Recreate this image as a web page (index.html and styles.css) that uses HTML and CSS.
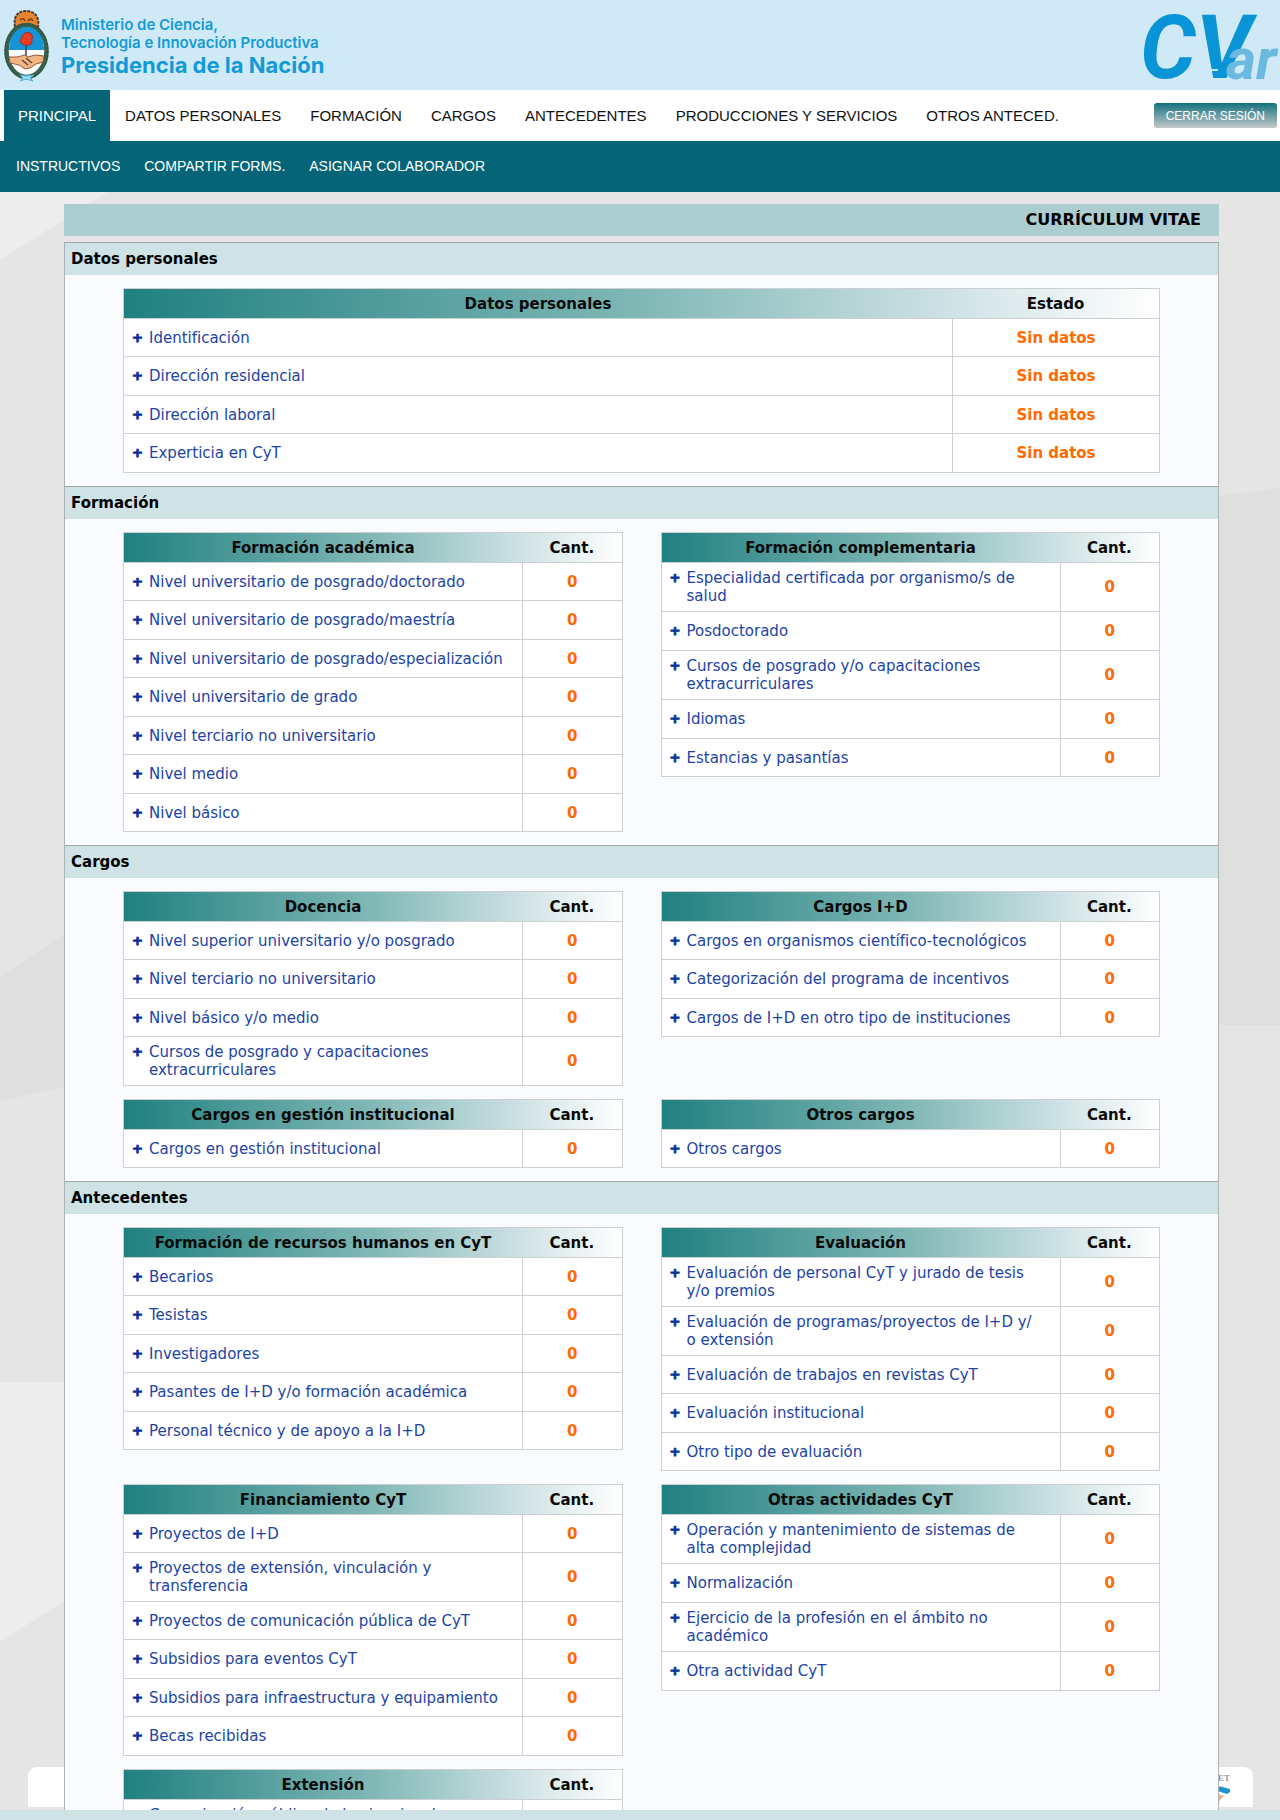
FILE: index.html
```html
<!DOCTYPE html>
<html lang="es">
<head>
<meta charset="utf-8">
<title>CVar - Currículum Vitae</title>
<link rel="stylesheet" href="styles.css">
</head>
<body>
<header class="banner">
  <a class="ministry" href="#">
    <svg class="emblem" viewBox="0 0 45 72" aria-hidden="true">
      <path d="M11 17C9 5 15 1 22 1s14 4 12 16z" fill="#e8842c" stroke="#4b3b35" stroke-width="2" stroke-dasharray="3 1"/>
      <path d="M16 10q3-3 5 1M24 11q3-4 5 0M19 15h7" fill="none" stroke="#7a3c17" stroke-width="1.5"/>
      <ellipse cx="22.500" cy="41" rx="20" ry="26" fill="#fff" stroke="#37614b" stroke-width="4.500"/>
      <ellipse cx="22.500" cy="41" rx="21.500" ry="27" fill="none" stroke="#27443a" stroke-width="1" stroke-dasharray="2 2"/>
      <path d="M5 40C5 25 13 17 22.500 17S40 25 40 40z" fill="#1595d8"/>
      <path d="M22 32v20" stroke="#3d4650" stroke-width="1.500"/>
      <path d="M17 33c-2-3 0-4 1-6 1-5 8-6 10-2 1 3-1 5 0 8-3 3-7 3-11 0z" fill="#ea3f25" stroke="#a22c20"/>
      <path d="M5 47l8 0 8-2 3 2 7-2 9 1-1 6-7 2-6 4-5 1-6-4-9-2z" fill="#f2b684" stroke="#8c5b3b"/>
      <path d="M18 50l6 5M22 48l6 5" stroke="#5c4030" stroke-width="1.500"/>
      <path d="M16 65l6 1 8-1-4 3 3 3-7-2-6 2 3-3z" fill="#a9dcf3" stroke="#4fb2df"/>
    </svg>
    <span class="ministry-name">
      <span>Ministerio de Ciencia,</span>
      <span>Tecnología e Innovación Productiva</span>
      <strong>Presidencia de la Nación</strong>
    </span>
  </a>
  <svg class="cvar" viewBox="0 0 140 90" role="img" aria-label="CVar">
    <text class="cvar-main" x="0" y="78">CV</text>
    <path d="M68 70h10" stroke="#cfeaf6" stroke-width="2"/>
    <text class="cvar-sub" x="86" y="79">ar</text>
  </svg>
</header>

<nav class="menu">
  <a class="active" href="#">PRINCIPAL</a>
  <a href="#">DATOS PERSONALES</a>
  <a href="#">FORMACIÓN</a>
  <a href="#">CARGOS</a>
  <a href="#">ANTECEDENTES</a>
  <a href="#">PRODUCCIONES Y SERVICIOS</a>
  <a href="#">OTROS ANTECED.</a>
  <button class="logout" type="button">CERRAR SESIÓN</button>
</nav>
<nav class="submenu">
  <a href="#">INSTRUCTIVOS</a>
  <a href="#">COMPARTIR FORMS.</a>
  <a href="#">ASIGNAR COLABORADOR</a>
</nav>

<main class="page">
  <svg class="backdrop" viewBox="0 0 1280 1618" preserveAspectRatio="none" aria-hidden="true">
    <path d="M0 0H108L0 68z" fill="#ededed"/>
    <path d="M0 785L64 743 1218 304 1280 296V833H1218L64 895 0 909z" fill="#dfdfdf"/>
    <path d="M0 1190H400L64 1409 0 1450z" fill="#ededed"/>
  </svg>
  <div class="sponsors">
    <svg class="sponsor" viewBox="0 0 64 40" aria-hidden="true">
      <text x="63" y="14" text-anchor="end">ET</text>
      <path d="M30 24q14-9 33-2v3l-3 2q-14-6-27 0z" fill="#1c95cc"/>
      <path d="M36 29q10-5 21 0l-5 5H40z" fill="#f2ae7c"/>
      <path d="M40 33h13l-4 3h-7z" fill="#3fa5a0"/>
    </svg>
  </div>

  <div class="content">
    <h1 class="title">CURRÍCULUM VITAE</h1>
    <div class="panel">
      <section>
        <h2>Datos personales</h2>
        <div class="tables single">
          <table>
            <thead><tr><th>Datos personales</th><th>Estado</th></tr></thead>
            <tbody>
              <tr><td><a href="#">Identificación</a></td><td>Sin datos</td></tr>
              <tr><td><a href="#">Dirección residencial</a></td><td>Sin datos</td></tr>
              <tr><td><a href="#">Dirección laboral</a></td><td>Sin datos</td></tr>
              <tr><td><a href="#">Experticia en CyT</a></td><td>Sin datos</td></tr>
            </tbody>
          </table>
        </div>
      </section>

      <section>
        <h2>Formación</h2>
        <div class="tables">
          <table>
            <thead><tr><th>Formación académica</th><th>Cant.</th></tr></thead>
            <tbody>
              <tr><td><a href="#">Nivel universitario de posgrado/doctorado</a></td><td>0</td></tr>
              <tr><td><a href="#">Nivel universitario de posgrado/maestría</a></td><td>0</td></tr>
              <tr><td><a href="#">Nivel universitario de posgrado/especialización</a></td><td>0</td></tr>
              <tr><td><a href="#">Nivel universitario de grado</a></td><td>0</td></tr>
              <tr><td><a href="#">Nivel terciario no universitario</a></td><td>0</td></tr>
              <tr><td><a href="#">Nivel medio</a></td><td>0</td></tr>
              <tr><td><a href="#">Nivel básico</a></td><td>0</td></tr>
            </tbody>
          </table>
          <table>
            <thead><tr><th>Formación complementaria</th><th>Cant.</th></tr></thead>
            <tbody>
              <tr><td><a href="#">Especialidad certificada por organismo/s de salud</a></td><td>0</td></tr>
              <tr><td><a href="#">Posdoctorado</a></td><td>0</td></tr>
              <tr><td><a href="#">Cursos de posgrado y/o capacitaciones extracurriculares</a></td><td>0</td></tr>
              <tr><td><a href="#">Idiomas</a></td><td>0</td></tr>
              <tr><td><a href="#">Estancias y pasantías</a></td><td>0</td></tr>
            </tbody>
          </table>
        </div>
      </section>

      <section>
        <h2>Cargos</h2>
        <div class="tables">
          <table>
            <thead><tr><th>Docencia</th><th>Cant.</th></tr></thead>
            <tbody>
              <tr><td><a href="#">Nivel superior universitario y/o posgrado</a></td><td>0</td></tr>
              <tr><td><a href="#">Nivel terciario no universitario</a></td><td>0</td></tr>
              <tr><td><a href="#">Nivel básico y/o medio</a></td><td>0</td></tr>
              <tr><td><a href="#">Cursos de posgrado y capacitaciones extracurriculares</a></td><td>0</td></tr>
            </tbody>
          </table>
          <table>
            <thead><tr><th>Cargos I+D</th><th>Cant.</th></tr></thead>
            <tbody>
              <tr><td><a href="#">Cargos en organismos científico-tecnológicos</a></td><td>0</td></tr>
              <tr><td><a href="#">Categorización del programa de incentivos</a></td><td>0</td></tr>
              <tr><td><a href="#">Cargos de I+D en otro tipo de instituciones</a></td><td>0</td></tr>
            </tbody>
          </table>
          <table>
            <thead><tr><th>Cargos en gestión institucional</th><th>Cant.</th></tr></thead>
            <tbody>
              <tr><td><a href="#">Cargos en gestión institucional</a></td><td>0</td></tr>
            </tbody>
          </table>
          <table>
            <thead><tr><th>Otros cargos</th><th>Cant.</th></tr></thead>
            <tbody>
              <tr><td><a href="#">Otros cargos</a></td><td>0</td></tr>
            </tbody>
          </table>
        </div>
      </section>

      <section>
        <h2>Antecedentes</h2>
        <div class="tables">
          <table>
            <thead><tr><th>Formación de recursos humanos en CyT</th><th>Cant.</th></tr></thead>
            <tbody>
              <tr><td><a href="#">Becarios</a></td><td>0</td></tr>
              <tr><td><a href="#">Tesistas</a></td><td>0</td></tr>
              <tr><td><a href="#">Investigadores</a></td><td>0</td></tr>
              <tr><td><a href="#">Pasantes de I+D y/o formación académica</a></td><td>0</td></tr>
              <tr><td><a href="#">Personal técnico y de apoyo a la I+D</a></td><td>0</td></tr>
            </tbody>
          </table>
          <table>
            <thead><tr><th>Evaluación</th><th>Cant.</th></tr></thead>
            <tbody>
              <tr><td><a href="#">Evaluación de personal CyT y jurado de tesis y/o premios</a></td><td>0</td></tr>
              <tr><td><a href="#"><span>Evaluación de programas/proyectos de I+D y/<wbr>o&nbsp;extensión</span></a></td><td>0</td></tr>
              <tr><td><a href="#">Evaluación de trabajos en revistas CyT</a></td><td>0</td></tr>
              <tr><td><a href="#">Evaluación institucional</a></td><td>0</td></tr>
              <tr><td><a href="#">Otro tipo de evaluación</a></td><td>0</td></tr>
            </tbody>
          </table>
          <table>
            <thead><tr><th>Financiamiento CyT</th><th>Cant.</th></tr></thead>
            <tbody>
              <tr><td><a href="#">Proyectos de I+D</a></td><td>0</td></tr>
              <tr><td><a href="#">Proyectos de extensión, vinculación y transferencia</a></td><td>0</td></tr>
              <tr><td><a href="#">Proyectos de comunicación pública de CyT</a></td><td>0</td></tr>
              <tr><td><a href="#">Subsidios para eventos CyT</a></td><td>0</td></tr>
              <tr><td><a href="#">Subsidios para infraestructura y equipamiento</a></td><td>0</td></tr>
              <tr><td><a href="#">Becas recibidas</a></td><td>0</td></tr>
            </tbody>
          </table>
          <table>
            <thead><tr><th>Otras actividades CyT</th><th>Cant.</th></tr></thead>
            <tbody>
              <tr><td><a href="#">Operación y mantenimiento de sistemas de alta complejidad</a></td><td>0</td></tr>
              <tr><td><a href="#">Normalización</a></td><td>0</td></tr>
              <tr><td><a href="#">Ejercicio de la profesión en el ámbito no académico</a></td><td>0</td></tr>
              <tr><td><a href="#">Otra actividad CyT</a></td><td>0</td></tr>
            </tbody>
          </table>
          <table>
            <thead><tr><th>Extensión</th><th>Cant.</th></tr></thead>
            <tbody>
              <tr><td><a href="#">Comunicación pública de la ciencia y la tecnología</a></td><td></td></tr>
            </tbody>
          </table>
        </div>
      </section>
    </div>
  </div>
</main>
<footer class="footer"></footer>
</body>
</html>
```
FILE: styles.css
```css
* {
  box-sizing: border-box;
}

body {
  margin: 0;
  height: 100vh;
  display: flex;
  flex-direction: column;
  overflow: hidden;
  background: #e5e5e5;
  font-family: Verdana, "DejaVu Sans", sans-serif;
  font-size: 15px;
  line-height: 18px;
}

a {
  text-decoration: none;
}

/* Banner */
.banner {
  flex: none;
  height: 90px;
  display: flex;
  justify-content: space-between;
  background: #cfeaf6;
}

.ministry {
  display: flex;
  gap: 12px;
  padding: 10px 0 0 4px;
  color: #139ad6;
}

.emblem {
  width: 45px;
  height: 72px;
}

.ministry-name {
  display: flex;
  flex-direction: column;
  padding-top: 6px;
  font-family: Inter, sans-serif;
  font-size: 15px;
  font-weight: 600;
}

.ministry-name strong {
  font-size: 22px;
  font-weight: 700;
  line-height: 26px;
}

.cvar {
  width: 140px;
  height: 90px;
}

.cvar text {
  font-family: Roboto, sans-serif;
  font-weight: 700;
  font-style: italic;
}

.cvar .cvar-main {
  font-size: 88px;
  fill: #0894d6;
}

.cvar .cvar-sub {
  font-size: 58px;
  fill: #6cb9e0;
}

/* Navigation */
.menu,
.submenu {
  flex: none;
  height: 51px;
  display: flex;
  align-items: center;
  padding: 0 3px 0 4px;
  font-family: Arial, "Liberation Sans", sans-serif;
}

.menu {
  gap: 1px;
  background: #fff;
}

.menu a,
.submenu a {
  line-height: 51px;
  white-space: nowrap;
}

.menu a {
  padding: 0 14px;
  color: #111;
}

.menu .active {
  background: #066478;
  color: #fff;
}

.submenu {
  background: #066478;
  font-size: 14px;
}

.submenu a {
  padding: 0 12px;
  color: #fff;
}

.logout {
  height: 25px;
  margin-left: auto;
  padding: 0 12px;
  border: 0;
  border-radius: 3px;
  background: linear-gradient(#13727e, #c4c8cb);
  color: #fff;
  font-family: inherit;
  font-size: 12px;
}

/* Page area */
.page {
  position: relative;
  flex: 1;
  min-height: 0;
  overflow: hidden;
}

.backdrop {
  position: absolute;
  inset: 0;
  width: 100%;
  height: 100%;
}

.sponsors {
  position: absolute;
  left: 28px;
  right: 27px;
  bottom: 3px;
  height: 40px;
  display: flex;
  justify-content: flex-end;
  padding-right: 22px;
  border-radius: 9px 9px 0 0;
  background: #fff;
}

.sponsor {
  width: 64px;
  height: 40px;
}

.sponsor text {
  font: 700 9px "Liberation Serif", serif;
  fill: #999;
}

.content {
  position: relative;
  padding: 12px 61px 0 64px;
}

.title {
  margin: 0 0 6px;
  padding: 0 18px;
  background: #adced0;
  color: #000;
  font-size: 16px;
  line-height: 32px;
  text-align: right;
}

.panel {
  border: solid #aeb2b4;
  border-width: 0 1px;
  background: #fafbff;
}

.panel h2 {
  margin: 0;
  padding: 0 6px;
  border-top: 1px solid #a0a4a5;
  background: #cfe3e7;
  color: #000;
  font-size: 15px;
  line-height: 32px;
}

.tables {
  display: grid;
  grid-template-columns: 1fr 1fr;
  align-items: start;
  gap: 13px 38px;
  padding: 13px 58px;
}

.tables.single {
  grid-template-columns: 1fr;
}

/* Data tables */
table {
  width: 100%;
  table-layout: fixed;
  border: solid #ccd0d1;
  border-width: 0 1px;
  border-collapse: separate;
  border-spacing: 0;
  background: #fff;
}

thead tr {
  background: linear-gradient(90deg, #208080, #80b8b6 50%, #cfe2e5 80%, #fff);
}

th {
  height: 31px;
  padding: 0;
  border: solid #ccd0d1;
  border-width: 1px 0;
  color: #0a0a0a;
}

th:first-child {
  width: 80%;
}

td {
  height: 38px;
  padding: 6px 8px;
  border-bottom: 1px solid #ccd0d1;
}

td:first-child {
  padding-right: 16px;
}

tr:nth-child(even) td {
  height: 39px;
}

td:last-child {
  border-left: 1px solid #ccd0d1;
  color: #ff6a00;
  font-weight: 700;
  text-align: center;
}

td a {
  display: grid;
  grid-template-columns: 17px 1fr;
  color: #1c44a5;
}

td a::before {
  content: "+";
  color: #0a339a;
  font-size: 13px;
  font-weight: 700;
  -webkit-text-stroke: 1px #0a339a;
}

.footer {
  flex: none;
  height: 10px;
  background: #cfe3e7;
}
```
